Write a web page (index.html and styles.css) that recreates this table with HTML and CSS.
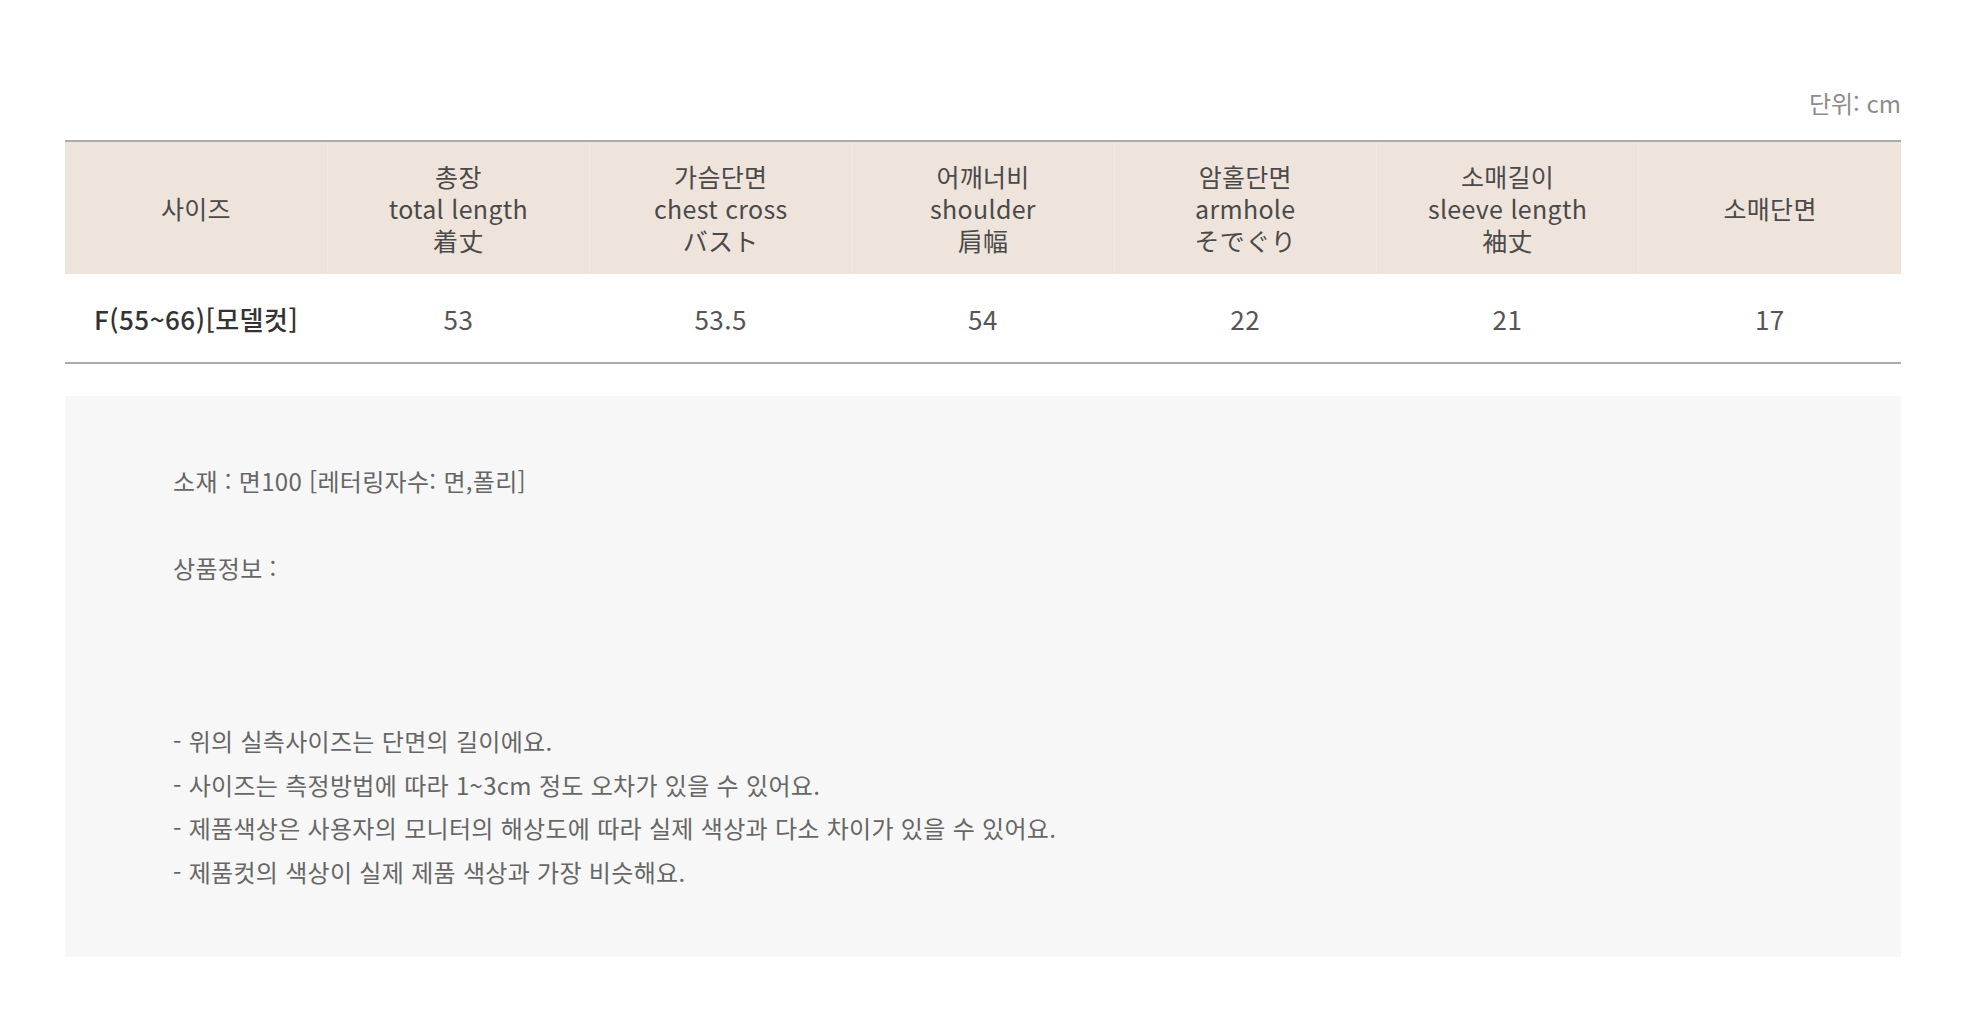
FILE: index.html
```html
<!DOCTYPE html>
<html lang="ko">
<head>
    <meta charset="UTF-8">
    <meta name="viewport" content="width=device-width, initial-scale=1.0">
    <title>사이즈 정보</title>
    <link rel="stylesheet" href="styles.css">
</head>
<body>
    <div class="size-wrap">
        <div class="unit">단위: cm</div>

        <table class="size-table">
            <thead>
                <tr>
                    <th>사이즈</th>
                    <th>총장<br>total length<br>着丈</th>
                    <th>가슴단면<br>chest cross<br>バスト</th>
                    <th>어깨너비<br>shoulder<br>肩幅</th>
                    <th>암홀단면<br>armhole<br>そでぐり</th>
                    <th>소매길이<br>sleeve length<br>袖丈</th>
                    <th>소매단면</th>
                </tr>
            </thead>
            <tbody>
                <tr>
                    <td class="size-name">F(55~66)[모델컷]</td>
                    <td>53</td>
                    <td>53.5</td>
                    <td>54</td>
                    <td>22</td>
                    <td>21</td>
                    <td>17</td>
                </tr>
            </tbody>
        </table>

        <div class="info-box">
            <p>소재 : 면100 [레터링자수: 면,폴리]<br><br>상품정보 :<br><br><br><br>- 위의 실측사이즈는 단면의 길이에요.<br>- 사이즈는 측정방법에 따라 1~3cm 정도 오차가 있을 수 있어요.<br>- 제품색상은 사용자의 모니터의 해상도에 따라 실제 색상과 다소 차이가 있을 수 있어요.<br>- 제품컷의 색상이 실제 제품 색상과 가장 비슷해요.</p>
        </div>
    </div>
</body>
</html>
```

FILE: styles.css
```css
body {
    margin: 0;
    padding: 0;
    background: #fff;
    font-family: "Noto Sans CJK KR", "Noto Sans", sans-serif;
    color: #555;
}

.size-wrap {
    padding: 87px 69px 0 65px;
}

.unit {
    text-align: right;
    font-size: 24px;
    line-height: 32px;
    color: #8c8c8c;
    margin-bottom: 21px;
}

.size-table {
    width: 100%;
    border-collapse: collapse;
    table-layout: fixed;
    border-top: 2px solid #ababab;
    border-bottom: 2px solid #ababab;
}

.size-table th {
    background-color: #eee4db;
    height: 132px;
    padding: 0;
    font-weight: normal;
    font-size: 25px;
    line-height: 32px;
    color: #4a4a4a;
    letter-spacing: 0.3px;
    border-left: 1px solid #f1e9e2;
}

.size-table th:first-child {
    border-left: none;
}

.size-table td {
    height: 88px;
    padding: 0;
    text-align: center;
    font-size: 26px;
    color: #555;
    letter-spacing: 0.5px;
}

.size-table td.size-name {
    color: #333;
    font-weight: 500;
}

.info-box {
    margin-top: 32px;
    background-color: #f7f7f7;
    padding: 63px 108px 64px;
}

.info-box p {
    margin: 0;
    font-size: 24px;
    line-height: 43.4px;
    color: #666;
    letter-spacing: 0.3px;
}
```
